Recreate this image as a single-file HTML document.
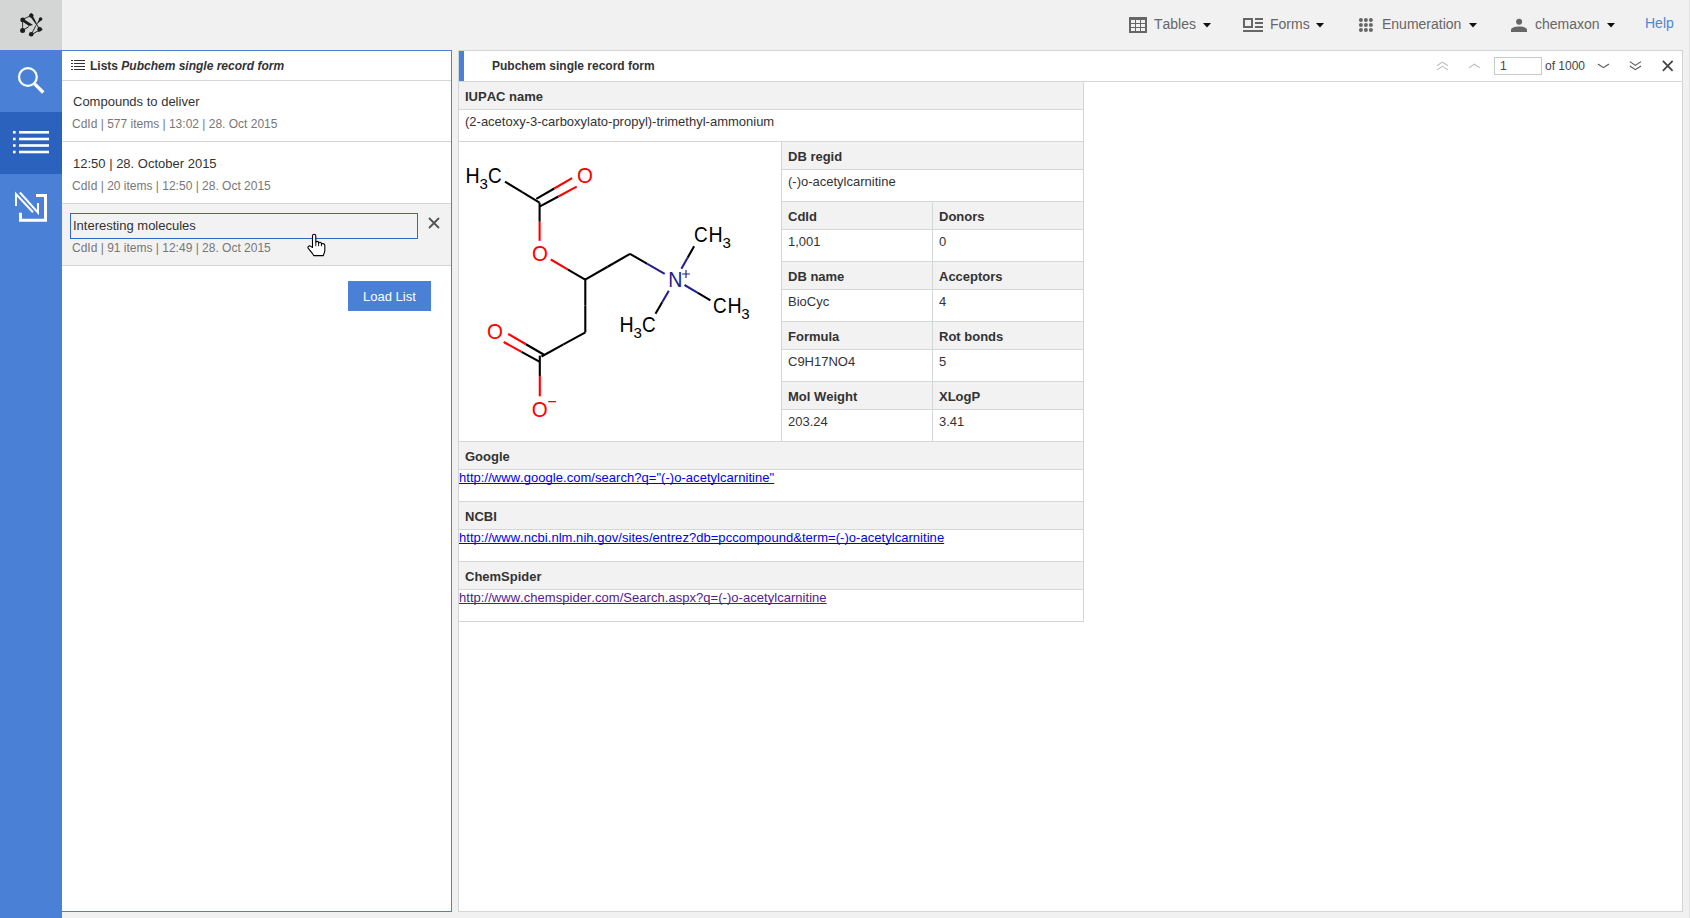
<!DOCTYPE html>
<html><head><meta charset="utf-8"><style>
*{box-sizing:border-box;margin:0;padding:0}
html,body{width:1690px;height:918px;overflow:hidden;background:#f1f1f1;font-family:"Liberation Sans",sans-serif;color:#333;font-kerning:none}
body{position:relative}
.abs{position:absolute}
.t{position:absolute;white-space:nowrap;line-height:1}
svg{position:absolute;overflow:visible}
a{color:inherit}
</style></head><body>
<div class="abs" style="left:0px;top:0px;width:62px;height:50px;background:#d4d5d5;"></div>
<svg style="left:0;top:0" width="62" height="50" viewBox="0 0 62 50">
<g fill="#1c1c1c" stroke="none">
<circle cx="31.3" cy="15.6" r="2.2"/><path d="M29.6 14.6 L31.1 12.9 L33 14.6 Z"/>
<path d="M30.2 16.6 L32.8 15.8 L38.3 26.6 L37.8 26.9 Z"/>
<circle cx="22.7" cy="19.9" r="2.4"/>
<path d="M24 19.3 L33 25 L29 26 L23.5 22.3 Z"/>
<circle cx="22.6" cy="30.6" r="2.5"/>
<circle cx="31.2" cy="34.3" r="2.3"/>
<path d="M38.2 26.3 L42.8 29.3 L38.2 32.3 Z"/><circle cx="39.6" cy="29.3" r="2.3"/>
<circle cx="40.6" cy="19" r="1.8"/>
<path d="M39.4 18.8 L41.8 19.8 L37.1 24 L36.9 23.8 Z"/>
</g>
<g stroke="#1c1c1c" fill="none" stroke-linecap="round">
<path d="M22.6 21.5 V29" stroke-width="0.9"/>
<path d="M24 29.6 L28.4 26.9" stroke-width="1"/>
<path d="M32.2 32.6 L35.8 25.8" stroke-width="0.9"/>
<path d="M32.5 34 L38.5 30.6" stroke-width="1"/>
<path d="M29.8 16.2 L24.4 18.6" stroke-width="0.9"/>
</g></svg>
<svg style="left:1129px;top:17px" width="18" height="16" viewBox="0 0 18 16">
<rect x="0" y="0" width="18" height="16" fill="#666"/>
<g fill="#f1f1f1">
<rect x="2" y="3" width="4" height="3"/><rect x="7" y="3" width="4" height="3"/><rect x="12" y="3" width="4" height="3"/>
<rect x="2" y="7" width="4" height="3"/><rect x="7" y="7" width="4" height="3"/><rect x="12" y="7" width="4" height="3"/>
<rect x="2" y="11" width="4" height="3"/><rect x="7" y="11" width="4" height="3"/><rect x="12" y="11" width="4" height="3"/>
</g></svg>
<div class="t" style="left:1154px;top:17.15px;font-size:14px;color:#666;">Tables</div>
<svg style="left:1203.2px;top:22.7px" width="8" height="5" viewBox="0 0 8 5"><path d="M0 0 H8 L4 4.4 Z" fill="#111"/></svg>
<svg style="left:1243px;top:18px" width="20" height="15" viewBox="0 0 20 15">
<g fill="#666">
<path d="M0 0 H10 V10 H0 Z M2 2 V8 H8 V2 Z" fill-rule="evenodd"/>
<rect x="12" y="0" width="8" height="2"/><rect x="12" y="4" width="8" height="2"/><rect x="12" y="8" width="8" height="2"/>
<rect x="0" y="12" width="20" height="2"/>
</g></svg>
<div class="t" style="left:1270px;top:17.15px;font-size:14px;color:#666;">Forms</div>
<svg style="left:1316.2px;top:22.7px" width="8" height="5" viewBox="0 0 8 5"><path d="M0 0 H8 L4 4.4 Z" fill="#111"/></svg>
<svg style="left:1358px;top:18px" width="16" height="15" viewBox="0 0 16 15"><g fill="#666"><circle cx="2.9" cy="2.0" r="2"/><circle cx="2.9" cy="7.0" r="2"/><circle cx="2.9" cy="12.0" r="2"/><circle cx="7.9" cy="2.0" r="2"/><circle cx="7.9" cy="7.0" r="2"/><circle cx="7.9" cy="12.0" r="2"/><circle cx="12.9" cy="2.0" r="2"/><circle cx="12.9" cy="7.0" r="2"/><circle cx="12.9" cy="12.0" r="2"/></g></svg>
<div class="t" style="left:1382px;top:17.15px;font-size:14px;color:#666;">Enumeration</div>
<svg style="left:1469.3px;top:22.7px" width="8" height="5" viewBox="0 0 8 5"><path d="M0 0 H8 L4 4.4 Z" fill="#111"/></svg>
<svg style="left:1511px;top:19px" width="16" height="13" viewBox="0 0 16 13">
<g fill="#666"><circle cx="8.1" cy="2.8" r="3"/><path d="M0 13 V11 C0 8.3 5 7.6 8 7.6 C11 7.6 16 8.3 16 11 V13 Z"/></g></svg>
<div class="t" style="left:1535px;top:17.15px;font-size:14px;color:#666;">chemaxon</div>
<svg style="left:1607.3px;top:22.7px" width="8" height="5" viewBox="0 0 8 5"><path d="M0 0 H8 L4 4.4 Z" fill="#111"/></svg>
<div class="t" style="left:1645px;top:16.15px;font-size:14px;color:#4a88d4;">Help</div>
<div class="abs" style="left:1689px;top:0px;width:1px;height:918px;background:#e3e3e3;"></div>
<div class="abs" style="left:0px;top:50px;width:62px;height:868px;background:#4a80d6;"></div>
<div class="abs" style="left:0px;top:112px;width:62px;height:62px;background:#2a62be;"></div>
<svg style="left:0;top:50px" width="62" height="62" viewBox="0 0 62 62">
<circle cx="27.9" cy="27" r="8.9" fill="none" stroke="#fff" stroke-width="2.2"/>
<path d="M34.6 33.8 L43.3 42.5" stroke="#fff" stroke-width="3.3" stroke-linecap="butt"/>
</svg>
<svg style="left:0;top:112px" width="62" height="62" viewBox="0 0 62 62">
<g fill="#fff">
<rect x="13" y="19" width="2.6" height="2.6"/><rect x="19" y="19" width="30" height="2.6"/>
<rect x="13" y="25.7" width="2.6" height="2.6"/><rect x="19" y="25.7" width="30" height="2.6"/>
<rect x="13" y="32.2" width="2.6" height="2.6"/><rect x="19" y="32.2" width="30" height="2.6"/>
<rect x="13" y="38.7" width="2.6" height="2.6"/><rect x="19" y="38.7" width="30" height="2.6"/>
</g></svg>
<svg style="left:0;top:174px" width="62" height="62" viewBox="0 0 62 62">
<g fill="none" stroke="#fff">
<path d="M36 21.5 H45.5 V46.3 H20.5 V38.7" stroke-width="3"/>
<path d="M16 32 V20 L33 38.3" stroke-width="2"/>
<path d="M19.9 18.5 L38 38.6 V29" stroke-width="2"/>
</g></svg>
<div class="abs" style="left:62px;top:50px;width:390px;height:862px;background:#fff;border:1px solid #4a80d6;border-left:none"></div>
<svg style="left:71px;top:60px" width="15" height="10" viewBox="0 0 15 10">
<g fill="#333">
<rect x="0" y="0" width="2" height="1"/><rect x="3" y="0" width="11" height="1"/>
<rect x="0" y="3" width="2" height="1"/><rect x="3" y="3" width="11" height="1"/>
<rect x="0" y="6" width="2" height="1"/><rect x="3" y="6" width="11" height="1"/>
<rect x="0" y="9" width="2" height="1"/><rect x="3" y="9" width="11" height="1"/>
</g></svg>
<div class="t" style="left:90px;top:59.84px;font-size:12px;font-weight:bold;color:#333;">Lists <i>Pubchem single record form</i></div>
<div class="abs" style="left:62px;top:80px;width:389px;height:1px;background:#d4d7d7;"></div>
<div class="t" style="left:73px;top:95.0px;font-size:13px;color:#333;">Compounds to deliver</div>
<div class="t" style="left:72px;top:117.84px;font-size:12px;color:#777;">CdId | 577 items | 13:02 | 28. Oct 2015</div>
<div class="abs" style="left:62px;top:141px;width:389px;height:1px;background:#d4d7d7;"></div>
<div class="t" style="left:73px;top:157.0px;font-size:13px;color:#333;">12:50 | 28. October 2015</div>
<div class="t" style="left:72px;top:179.84px;font-size:12px;color:#777;">CdId | 20 items | 12:50 | 28. Oct 2015</div>
<div class="abs" style="left:62px;top:203px;width:389px;height:1px;background:#d4d7d7;"></div>
<div class="abs" style="left:62px;top:204px;width:389px;height:61px;background:#f2f2f2;"></div>
<div class="abs" style="left:70px;top:213px;width:348px;height:26px;border:1px solid #2f6ac8"></div>
<div class="t" style="left:73px;top:219.0px;font-size:13px;color:#333;">Interesting molecules</div>
<div class="t" style="left:72px;top:241.84px;font-size:12px;color:#777;">CdId | 91 items | 12:49 | 28. Oct 2015</div>
<svg style="left:428px;top:217px" width="12" height="12" viewBox="0 0 12 12">
<path d="M1 1 L11 11 M11 1 L1 11" stroke="#555" stroke-width="1.8"/></svg>
<div class="abs" style="left:62px;top:265px;width:389px;height:1px;background:#d4d7d7;"></div>
<div class="abs" style="left:348px;top:281px;width:83px;height:30px;background:#4a80d6"></div>
<div class="t" style="left:363px;top:290.0px;font-size:13px;color:#fff;">Load List</div>
<div class="abs" style="left:458px;top:50px;width:1225px;height:862px;background:#fff;border:1px solid #d2d5d5"></div>
<div class="abs" style="left:459px;top:51px;width:5px;height:30px;background:#4a80d6;"></div>
<div class="t" style="left:492px;top:59.84px;font-size:12px;font-weight:bold;color:#333;">Pubchem single record form</div>
<div class="abs" style="left:459px;top:81px;width:1223px;height:1px;background:#d4d7d7;"></div>
<svg style="left:0;top:0" width="1690" height="100" viewBox="0 0 1690 100">
<g fill="none" stroke-linecap="round" stroke-linejoin="miter">
<path d="M1437.3 65.5 L1442.4 62.1 L1447.6 65.5 M1437.3 69.6 L1442.4 66.3 L1447.6 69.6" stroke="#bdbdbd" stroke-width="1.1"/>
<path d="M1469.2 67.6 L1474.4 64.2 L1479.5 67.6" stroke="#bdbdbd" stroke-width="1.1"/>
<path d="M1598.3 64.3 L1603.5 67.7 L1608.6 64.3" stroke="#555" stroke-width="1.1"/>
<path d="M1630.2 61.9 L1635.4 65.4 L1640.6 61.9 M1630.2 66.2 L1635.4 69.6 L1640.6 66.2" stroke="#555" stroke-width="1.1"/>
<path d="M1662.9 60.8 L1672.6 70.8 M1672.6 60.8 L1662.9 70.8" stroke="#444" stroke-width="1.8" stroke-linecap="butt"/>
</g></svg>
<div class="abs" style="left:1494px;top:57px;width:48px;height:18px;border:1px solid #c9c9c9;background:#fff"></div>
<div class="t" style="left:1500px;top:59.84px;font-size:12px;color:#444;">1</div>
<div class="t" style="left:1545px;top:59.84px;font-size:12px;color:#444;">of 1000</div>
<div class="abs" style="left:459px;top:81px;width:624px;height:1px;background:#d4d7d7;"></div>
<div class="abs" style="left:459px;top:82px;width:624px;height:27px;background:#f2f2f2;"></div>
<div class="abs" style="left:459px;top:109px;width:624px;height:1px;background:#d4d7d7;"></div>
<div class="t" style="left:465px;top:90.0px;font-size:13px;font-weight:bold;color:#333;">IUPAC name</div>
<div class="t" style="left:465px;top:115.0px;font-size:13px;color:#333;">(2-acetoxy-3-carboxylato-propyl)-trimethyl-ammonium</div>
<div class="abs" style="left:459px;top:141px;width:624px;height:1px;background:#d4d7d7;"></div>
<div class="abs" style="left:781px;top:141px;width:302px;height:1px;background:#d4d7d7;"></div>
<div class="abs" style="left:781px;top:142px;width:302px;height:27px;background:#f2f2f2;"></div>
<div class="abs" style="left:781px;top:169px;width:302px;height:1px;background:#d4d7d7;"></div>
<div class="t" style="left:788px;top:150.0px;font-size:13px;font-weight:bold;color:#333;">DB regid</div>
<div class="t" style="left:788px;top:175.0px;font-size:13px;color:#333;">(-)o-acetylcarnitine</div>
<div class="abs" style="left:781px;top:201px;width:151px;height:1px;background:#d4d7d7;"></div>
<div class="abs" style="left:781px;top:202px;width:151px;height:27px;background:#f2f2f2;"></div>
<div class="abs" style="left:781px;top:229px;width:151px;height:1px;background:#d4d7d7;"></div>
<div class="t" style="left:788px;top:210.0px;font-size:13px;font-weight:bold;color:#333;">CdId</div>
<div class="t" style="left:788px;top:235.0px;font-size:13px;color:#333;">1,001</div>
<div class="abs" style="left:932px;top:201px;width:151px;height:1px;background:#d4d7d7;"></div>
<div class="abs" style="left:932px;top:202px;width:151px;height:27px;background:#f2f2f2;"></div>
<div class="abs" style="left:932px;top:229px;width:151px;height:1px;background:#d4d7d7;"></div>
<div class="t" style="left:939px;top:210.0px;font-size:13px;font-weight:bold;color:#333;">Donors</div>
<div class="t" style="left:939px;top:235.0px;font-size:13px;color:#333;">0</div>
<div class="abs" style="left:781px;top:261px;width:151px;height:1px;background:#d4d7d7;"></div>
<div class="abs" style="left:781px;top:262px;width:151px;height:27px;background:#f2f2f2;"></div>
<div class="abs" style="left:781px;top:289px;width:151px;height:1px;background:#d4d7d7;"></div>
<div class="t" style="left:788px;top:270.0px;font-size:13px;font-weight:bold;color:#333;">DB name</div>
<div class="t" style="left:788px;top:295.0px;font-size:13px;color:#333;">BioCyc</div>
<div class="abs" style="left:932px;top:261px;width:151px;height:1px;background:#d4d7d7;"></div>
<div class="abs" style="left:932px;top:262px;width:151px;height:27px;background:#f2f2f2;"></div>
<div class="abs" style="left:932px;top:289px;width:151px;height:1px;background:#d4d7d7;"></div>
<div class="t" style="left:939px;top:270.0px;font-size:13px;font-weight:bold;color:#333;">Acceptors</div>
<div class="t" style="left:939px;top:295.0px;font-size:13px;color:#333;">4</div>
<div class="abs" style="left:781px;top:321px;width:151px;height:1px;background:#d4d7d7;"></div>
<div class="abs" style="left:781px;top:322px;width:151px;height:27px;background:#f2f2f2;"></div>
<div class="abs" style="left:781px;top:349px;width:151px;height:1px;background:#d4d7d7;"></div>
<div class="t" style="left:788px;top:330.0px;font-size:13px;font-weight:bold;color:#333;">Formula</div>
<div class="t" style="left:788px;top:355.0px;font-size:13px;color:#333;">C9H17NO4</div>
<div class="abs" style="left:932px;top:321px;width:151px;height:1px;background:#d4d7d7;"></div>
<div class="abs" style="left:932px;top:322px;width:151px;height:27px;background:#f2f2f2;"></div>
<div class="abs" style="left:932px;top:349px;width:151px;height:1px;background:#d4d7d7;"></div>
<div class="t" style="left:939px;top:330.0px;font-size:13px;font-weight:bold;color:#333;">Rot bonds</div>
<div class="t" style="left:939px;top:355.0px;font-size:13px;color:#333;">5</div>
<div class="abs" style="left:781px;top:381px;width:151px;height:1px;background:#d4d7d7;"></div>
<div class="abs" style="left:781px;top:382px;width:151px;height:27px;background:#f2f2f2;"></div>
<div class="abs" style="left:781px;top:409px;width:151px;height:1px;background:#d4d7d7;"></div>
<div class="t" style="left:788px;top:390.0px;font-size:13px;font-weight:bold;color:#333;">Mol Weight</div>
<div class="t" style="left:788px;top:415.0px;font-size:13px;color:#333;">203.24</div>
<div class="abs" style="left:932px;top:381px;width:151px;height:1px;background:#d4d7d7;"></div>
<div class="abs" style="left:932px;top:382px;width:151px;height:27px;background:#f2f2f2;"></div>
<div class="abs" style="left:932px;top:409px;width:151px;height:1px;background:#d4d7d7;"></div>
<div class="t" style="left:939px;top:390.0px;font-size:13px;font-weight:bold;color:#333;">XLogP</div>
<div class="t" style="left:939px;top:415.0px;font-size:13px;color:#333;">3.41</div>
<div class="abs" style="left:459px;top:441px;width:624px;height:1px;background:#d4d7d7;"></div>
<div class="abs" style="left:781px;top:141px;width:1px;height:300px;background:#d4d7d7;"></div>
<div class="abs" style="left:932px;top:201px;width:1px;height:240px;background:#d4d7d7;"></div>
<div class="abs" style="left:1083px;top:81px;width:1px;height:541px;background:#d4d7d7;"></div>
<div class="abs" style="left:459px;top:441px;width:624px;height:1px;background:#d4d7d7;"></div>
<div class="abs" style="left:459px;top:442px;width:624px;height:27px;background:#f2f2f2;"></div>
<div class="abs" style="left:459px;top:469px;width:624px;height:1px;background:#d4d7d7;"></div>
<div class="t" style="left:465px;top:450.0px;font-size:13px;font-weight:bold;color:#333;">Google</div>
<div class="t" style="left:459px;top:471.0px;font-size:13px;color:#0000ee;text-decoration:underline;text-decoration-skip-ink:none;letter-spacing:0.04px;">http://www.google.com/search?q="(-)o-acetylcarnitine"</div>
<div class="abs" style="left:459px;top:501px;width:624px;height:1px;background:#d4d7d7;"></div>
<div class="abs" style="left:459px;top:502px;width:624px;height:27px;background:#f2f2f2;"></div>
<div class="abs" style="left:459px;top:529px;width:624px;height:1px;background:#d4d7d7;"></div>
<div class="t" style="left:465px;top:510.0px;font-size:13px;font-weight:bold;color:#333;">NCBI</div>
<div class="t" style="left:459px;top:531.0px;font-size:13px;color:#0000ee;text-decoration:underline;text-decoration-skip-ink:none;letter-spacing:0.04px;">http://www.ncbi.nlm.nih.gov/sites/entrez?db=pccompound&amp;term=(-)o-acetylcarnitine</div>
<div class="abs" style="left:459px;top:561px;width:624px;height:1px;background:#d4d7d7;"></div>
<div class="abs" style="left:459px;top:562px;width:624px;height:27px;background:#f2f2f2;"></div>
<div class="abs" style="left:459px;top:589px;width:624px;height:1px;background:#d4d7d7;"></div>
<div class="t" style="left:465px;top:570.0px;font-size:13px;font-weight:bold;color:#333;">ChemSpider</div>
<div class="t" style="left:459px;top:591.0px;font-size:13px;color:#551a8b;text-decoration:underline;text-decoration-skip-ink:none;letter-spacing:0.04px;">http://www.chemspider.com/Search.aspx?q=(-)o-acetylcarnitine</div>
<div class="abs" style="left:459px;top:621px;width:624px;height:1px;background:#d4d7d7;"></div>
<svg style="left:0;top:0" width="1690" height="918" viewBox="0 0 1690 918"><g stroke-width="2.1" fill="none" stroke-linecap="butt"><path d="M505 181.7 L522.25 192.15" stroke="#000"/><path d="M522.25 192.15 L539.5 202.6" stroke="#000"/><path d="M536.3 198.8 L554.20 188.50" stroke="#000"/><path d="M554.20 188.50 L572.1 178.2" stroke="#f00"/><path d="M540 206.4 L558.35 196.50" stroke="#000"/><path d="M558.35 196.50 L576.7 186.6" stroke="#f00"/><path d="M539.6 202.6 L539.60 221.70" stroke="#000"/><path d="M539.60 221.70 L539.6 240.8" stroke="#f00"/><path d="M550.8 259.5 L568.00 269.55" stroke="#f00"/><path d="M568.00 269.55 L585.2 279.6" stroke="#000"/><path d="M585.2 279.6 L607.60 266.75" stroke="#000"/><path d="M607.60 266.75 L630 253.9" stroke="#000"/><path d="M630 253.9 L647.35 263.85" stroke="#000"/><path d="M647.35 263.85 L664.7 273.8" stroke="#22228c"/><path d="M681.4 268.7 L687.75 257.50" stroke="#22228c"/><path d="M687.75 257.50 L694.1 246.3" stroke="#000"/><path d="M684.5 285 L697.45 292.65" stroke="#22228c"/><path d="M697.45 292.65 L710.4 300.3" stroke="#000"/><path d="M668.8 290.8 L662.15 302.25" stroke="#22228c"/><path d="M662.15 302.25 L655.5 313.7" stroke="#000"/><path d="M585.3 278.6 L585.30 305.45" stroke="#000"/><path d="M585.30 305.45 L585.3 332.3" stroke="#000"/><path d="M585.4 332.3 L563.45 344.40" stroke="#000"/><path d="M563.45 344.40 L541.5 356.5" stroke="#000"/><path d="M543.6 354.5 L525.90 344.25" stroke="#000"/><path d="M525.90 344.25 L508.2 334" stroke="#f00"/><path d="M539.4 361.6 L521.55 351.80" stroke="#000"/><path d="M521.55 351.80 L503.7 342" stroke="#f00"/><path d="M539.8 355.6 L539.80 375.95" stroke="#000"/><path d="M539.80 375.95 L539.8 396.3" stroke="#f00"/></g><g font-family="Liberation Sans"><text transform="translate(465.45 182.92) scale(0.912 1)" fill="#000" font-size="21.5">H</text><text transform="translate(479.39 188.70) scale(0.973 1)" fill="#000" font-size="15.5">3</text><text transform="translate(488.04 182.69) scale(0.881 1)" fill="#000" font-size="21.5">C</text><text transform="translate(576.98 182.72) scale(0.954 1)" fill="#f00" font-size="21.5">O</text><text transform="translate(531.98 260.72) scale(0.954 1)" fill="#f00" font-size="21.5">O</text><text transform="translate(668.31 286.90) scale(0.912 1)" fill="#22228c" font-size="21.5">N</text><text transform="translate(694.10 241.84) scale(0.881 1)" fill="#000" font-size="21.5">C</text><text transform="translate(708.44 241.90) scale(0.912 1)" fill="#000" font-size="21.5">H</text><text transform="translate(722.38 247.85) scale(0.973 1)" fill="#000" font-size="15.5">3</text><text transform="translate(713.04 312.69) scale(0.881 1)" fill="#000" font-size="21.5">C</text><text transform="translate(727.39 312.90) scale(0.912 1)" fill="#000" font-size="21.5">H</text><text transform="translate(741.33 318.70) scale(0.973 1)" fill="#000" font-size="15.5">3</text><text transform="translate(619.45 331.90) scale(0.912 1)" fill="#000" font-size="21.5">H</text><text transform="translate(633.39 337.85) scale(0.973 1)" fill="#000" font-size="15.5">3</text><text transform="translate(642.04 331.84) scale(0.881 1)" fill="#000" font-size="21.5">C</text><text transform="translate(486.98 338.72) scale(0.954 1)" fill="#f00" font-size="21.5">O</text><text transform="translate(531.87 416.69) scale(0.954 1)" fill="#f00" font-size="21.5">O</text></g><path d="M548.3 401.65 H556.1" stroke="#f00" stroke-width="1.3"/><path d="M682.1 274 H689.9 M686 270.1 V277.9" stroke="#22228c" stroke-width="1.15"/></svg>
<svg style="left:305px;top:232px" width="24" height="26" viewBox="0 0 24 26">
<path d="M7.5 15.5 V4 C7.5 1.7 10.8 1.7 10.8 4 V10.6 C10.8 8.9 13.6 8.9 13.6 10.6 V11.4 C13.6 9.9 16.4 9.9 16.4 11.6 V12.6 C16.4 11.2 19.8 11.2 19.8 13.2 V18.6 C19.8 20.6 18.6 22 18.3 23.6 H8.7 C8.1 21.6 4.6 18 3.3 16.4 C2.2 14.9 4 13 5.8 14.4 Z" fill="#fff" stroke="#000" stroke-width="1.1" stroke-linejoin="round"/>
<path d="M10.8 10.6 V14.2 M13.6 11.4 V14.2 M16.4 12.6 V14.2" stroke="#000" stroke-width="0.9"/>
</svg>
</body></html>
